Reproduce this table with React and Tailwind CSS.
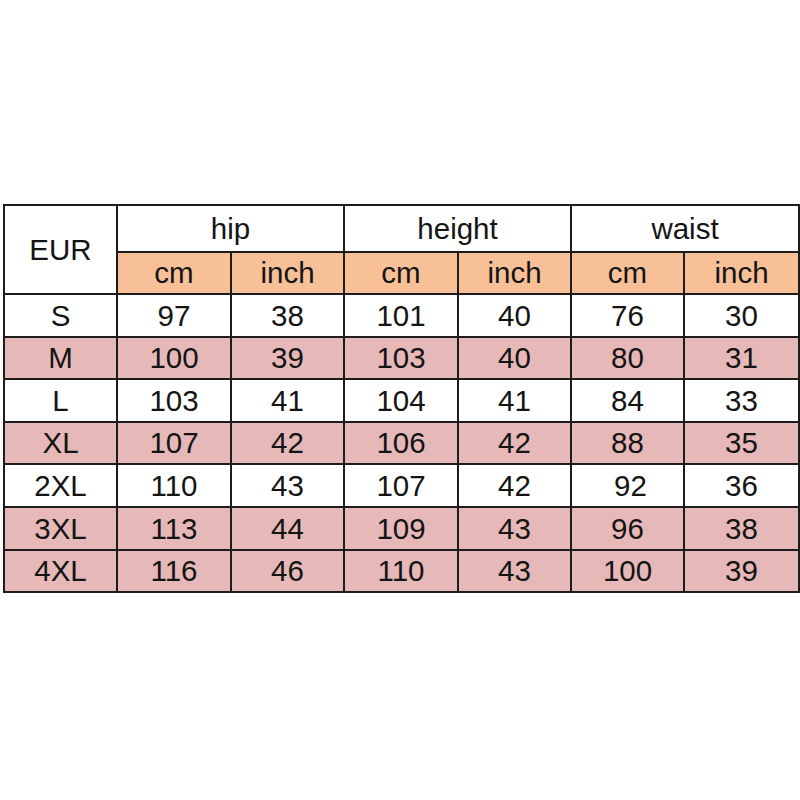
import React from "react";

const rows = [
  { size: "S", hip: ["97", "38"], height: ["101", "40"], waist: ["76", "30"], pink: false },
  { size: "M", hip: ["100", "39"], height: ["103", "40"], waist: ["80", "31"], pink: true },
  { size: "L", hip: ["103", "41"], height: ["104", "41"], waist: ["84", "33"], pink: false },
  { size: "XL", hip: ["107", "42"], height: ["106", "42"], waist: ["88", "35"], pink: true },
  { size: "2XL", hip: ["110", "43"], height: ["107", "42"], waist: ["92", "36"], pink: false },
  { size: "3XL", hip: ["113", "44"], height: ["109", "43"], waist: ["96", "38"], pink: true },
  { size: "4XL", hip: ["116", "46"], height: ["110", "43"], waist: ["100", "39"], pink: true },
];

const cell = "border-2 border-[#1c1c1c] text-center align-middle p-0";

const App = () => {
  return (
    <div
      className="w-[800px] h-[800px] bg-white pt-[204px] pl-[3px] text-[#141414]"
      style={{ fontFamily: '"Liberation Sans", Arial, sans-serif' }}
    >
      <table className="border-collapse text-[29.5px] leading-none table-fixed w-[795px]">
        <colgroup>
          <col className="w-[113px]" />
          <col className="w-[114px]" />
          <col className="w-[113px]" />
          <col className="w-[114px]" />
          <col className="w-[113px]" />
          <col className="w-[113px]" />
          <col className="w-[115px]" />
        </colgroup>
        <thead>
          <tr className="h-[47px]">
            <th rowSpan={2} className={`${cell} font-normal bg-white`}>EUR</th>
            <th colSpan={2} className={`${cell} font-normal bg-white`}>hip</th>
            <th colSpan={2} className={`${cell} font-normal bg-white`}>height</th>
            <th colSpan={2} className={`${cell} font-normal bg-white`}>waist</th>
          </tr>
          <tr className="h-[42px]">
            {["cm", "inch", "cm", "inch", "cm", "inch"].map((t, i) => (
              <th key={i} className={`${cell} font-normal bg-[#f8c097]`}>{t}</th>
            ))}
          </tr>
        </thead>
        <tbody>
          {rows.map((r) => (
            <tr key={r.size} className={`h-[42.6px] ${r.pink ? "bg-[#e6b9b8]" : "bg-white"}`}>
              <td className={cell}>{r.size}</td>
              <td className={cell}>{r.hip[0]}</td>
              <td className={cell}>{r.hip[1]}</td>
              <td className={cell}>{r.height[0]}</td>
              <td className={cell}>{r.height[1]}</td>
              <td className={`${cell} ${r.size === "2XL" ? "pl-[6px]" : ""}`}>{r.waist[0]}</td>
              <td className={cell}>{r.waist[1]}</td>
            </tr>
          ))}
        </tbody>
      </table>
    </div>
  );
};

export default App;
